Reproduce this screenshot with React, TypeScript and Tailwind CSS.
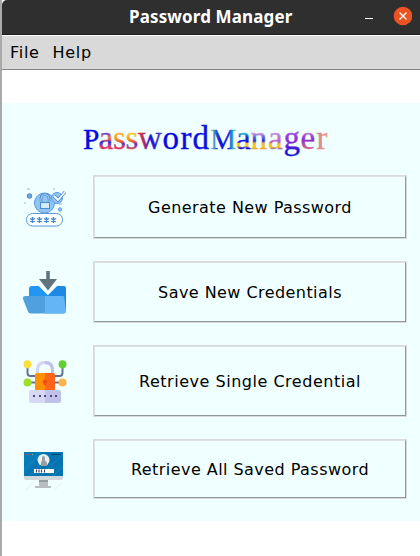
import React from "react";

function GenerateIcon() {
  return (
    <svg width="42" height="40" viewBox="0 0 42 40" fill="none">
      <path d="M7 38 38 7M20 39 41 17M0 25 16 8" stroke="#dce9ea" strokeWidth=".6" />
      <circle cx="5.500" cy="8" r="2.300" fill="#6dabe4" stroke="#4b83bd" />
      <path d="M3 1h3M10 13h3M29 1h2M35 16h3M36 19v2M0 15h2" stroke="#8bbbe9" />
      <circle cx="20.500" cy="15" r="10" fill="#8fc4f3" stroke="#5b9de0" />
      <path d="M17 14v-3.500q0-4 4-4t4 4V14" stroke="#4c8ed2" strokeWidth="2.600" />
      <path d="M17 14v-3.500q0-4 4-4t4 4V14" stroke="#c9e5fb" strokeWidth=".8" />
      <rect x="16.500" y="14.500" width="9" height="6" fill="#d3ebfd" stroke="#4c8ed2" />
      <circle cx="33" cy="10" r="5.500" fill="#8fc4f3" stroke="#5b9de0" />
      <path d="m30 8 4 4 7-8" stroke="#4787cb" strokeWidth="3.200" />
      <path d="m30 8 4 4 7-8" stroke="#fff" strokeWidth="1.800" />
      <circle cx="36" cy="21.500" r="1.600" fill="#8fc4f3" stroke="#5b9de0" />
      <rect x="2.500" y="25.500" width="36" height="12.500" rx="6" fill="#fcffff" stroke="#5a98d8" />
      <path d="M8.500 29v6M6 30.500l5 3M11 30.500l-5 3M15.500 29v6M13 30.500l5 3M18 30.500l-5 3M22.500 29v6M20 30.500l5 3M25 30.500l-5 3M29.500 29v6M27 30.500l5 3M32 30.500l-5 3" stroke="#4488cb" strokeWidth="1.400" />
    </svg>
  );
}

function SaveIcon() {
  return (
    <svg width="44" height="44" viewBox="0 0 44 44">
      <path d="M6 42V19q0-3 3-3h7l9 9 9-9h6q3 0 3 3v21q0 3-3 3z" fill="#2196f3" />
      <path d="M25 25l9-9h6q3 0 3 3v21q0 3-3 3H25z" fill="#1e88e5" />
      <path d="M2.500 26H41v17.500H8q-2.500 0-3-2L0 29q-.5-3 2.500-3z" fill="#519fdc" />
      <path d="M22 26h17q2 0 2.300 2L43 41q0 2.500-2 2.500H22z" fill="#64b5f6" />
      <path d="m14 14 11 11 11-11v-2H14z" fill="#f0ffff" />
      <path d="M23.200 1h3.600v8H34l-9 11.500L16 9h7.200z" fill="#60747e" />
    </svg>
  );
}

function RetrieveIcon() {
  return (
    <svg width="44" height="44" viewBox="0 0 44 44" fill="none">
      <path d="M4.500 6v8q0 3 3 3H15M39.500 6v8q0 3-3 3H30M7 23.500h7M30 23.500h7" stroke="#647295" strokeWidth="2" />
      <path d="M14.500 15v-4q0-7.500 7.500-7.500t7.500 7.500v4" stroke="#d4d5f3" strokeWidth="3" />
      <path d="M22 3.500q7.500 0 7.500 7.500v4" stroke="#bfc0e9" strokeWidth="3" />
      <path d="M12 16q0-2 2-2h8v19H12z" fill="#ff9100" />
      <path d="M22 14h8q2 0 2 2v17H22z" fill="#ff641a" />
      <path d="M22 20.500a2.200 2.200 0 0 0-1 4.200V26h2v-1.300a2.200 2.200 0 0 0-1-4.200z" fill="#ee4b19" />
      <circle cx="4.500" cy="5.300" r="4" fill="#ffdd40" />
      <circle cx="39.500" cy="5.300" r="4" fill="#66ce34" />
      <circle cx="4.500" cy="23.500" r="4" fill="#9edf28" />
      <circle cx="39.500" cy="23.500" r="4" fill="#ffb347" />
      <path d="M8 31h14v13H8q-2 0-2-2v-9q0-2 2-2z" fill="#d7d8f5" />
      <path d="M22 31h14q2 0 2 2v9q0 2-2 2H22z" fill="#c1c2ea" />
      <path d="M10 37h2M16 37h2M21 37h2M27 37h2M32 37h2" stroke="#484a78" strokeWidth="2" />
    </svg>
  );
}

function MonitorIcon() {
  return (
    <svg className="mt-[6px]" width="40" height="40" viewBox="0 0 40 40" fill="none">
      <path d="M0 0h39v24H0z" fill="#087bb9" />
      <path d="M20 0h19v24H0z" fill="#00659f" opacity=".3" />
      <path d="M0 18 18 0M5 24 29 0M17 24 39 2M29 24 39 14" stroke="#2189c0" strokeWidth=".6" />
      <path d="M0 24h39v2q0 2-2 2H2q-2 0-2-2z" fill="#d2d8d9" />
      <path d="M15 28h9v6h3v2H11v-2h4z" fill="#b7bdc0" />
      <path d="M15 28h9v2h-9z" fill="#929da2" />
      <circle cx="19.500" cy="8" r="6" fill="#e8f1f2" />
      <path d="M18 5.500q0-1.500 1.500-1.500t1.500 1.500v3l2 2V14h-6v-3.500l1-2z" fill="#9a9fa4" />
      <path d="M2 2.500h5" stroke="#d93b45" strokeDasharray="2 1" />
      <path d="M8 2.500h1" stroke="#81be8d" />
      <path d="M27 2.500h10" stroke="#07476c" />
      <path d="M10 17h20v4H10z" fill="#fff" />
      <path d="M12.500 17.500v3M15 17.500v3M17.500 17.500v3M20.500 17.500v3" stroke="#3d4751" strokeWidth="1.200" />
      <path d="m2 38 7-8M31 38l6-7" stroke="#d6e1e1" strokeWidth=".6" />
    </svg>
  );
}

type Stop = [number, string];
const vertical: Record<string, Stop[]> = {
  a1: [[9, "#7a48c8"], [12, "#e9784b"], [15, "#e24a4e"], [17, "#281ddd"], [19, "#6a2ecb"], [22, "#e83a5a"], [24, "#d83468"]],
  s1: [[8, "#fbb02a"], [14, "#f59a2c"], [17, "#e2533f"], [19, "#4d2dc8"], [22, "#e8425a"], [24, "#e22f55"]],
  s2: [[8, "#ffc62a"], [14, "#f5a02c"], [17, "#e8553f"], [19, "#5632c4"], [22, "#a04a86"], [24, "#e24a50"]],
  a2: [[8, "#35c9d0"], [12, "#1a32dc"], [17, "#1411d8"], [18.5, "#f3c21f"], [21, "#f9cd1b"], [23, "#1616d8"]],
  n: [[8, "#d9a2de"], [12, "#6b5fe0"], [16, "#2723d8"], [18, "#d9b24a"], [21, "#fbc816"], [24, "#e6a83a"]],
  a3: [[8, "#b99be0"], [13, "#c66fc8"], [17, "#b95fc4"], [19, "#f5b92a"], [22, "#f9c81b"], [24, "#9a58ba"]],
  g: [[8, "#9c4fd8"], [17, "#8a25d8"], [22, "#5d22da"], [25, "#1c14dc"], [30, "#1c14dc"]],
  e: [[8, "#b76ad8"], [14, "#8a2bd0"], [18, "#a640b8"], [24, "#cf6a90"]],
};
const horizontal: Record<string, { from: number; to: number; stops: Stop[] }> = {
  w: { from: 57, to: 82, stops: [[0, "#e8352f"], [0.3, "#a02a80"], [0.45, "#1f14dc"], [0.7, "#2c22cc"], [1, "#6a55b8"]] },
  m: { from: 130, to: 155, stops: [[0, "#8fdcae"], [0.2, "#2d62c8"], [0.35, "#0f10dc"], [0.7, "#1420dc"], [0.88, "#2cb6cc"], [1, "#8ccf8e"]] },
  r: { from: 235, to: 247, stops: [[0, "#cf7c9a"], [0.5, "#e28f84"], [1, "#f0a890"]] },
};
const letters = [
  { char: "P", x: 2, fill: "#0a0adf", cap: true },
  { char: "a", x: 17.5, fill: "url(#a1)" },
  { char: "s", x: 32, fill: "url(#s1)" },
  { char: "s", x: 44.5, fill: "url(#s2)" },
  { char: "w", x: 57, fill: "url(#w)" },
  { char: "o", x: 81.5, fill: "#0a0adf" },
  { char: "r", x: 99.5, fill: "#0a0adf" },
  { char: "d", x: 111.5, fill: "#0d12dc" },
  { char: "M", x: 129, fill: "url(#m)", cap: true },
  { char: "a", x: 155, fill: "url(#a2)" },
  { char: "n", x: 169.5, fill: "url(#n)" },
  { char: "a", x: 187, fill: "url(#a3)" },
  { char: "g", x: 202.5, fill: "url(#g)" },
  { char: "e", x: 219.5, fill: "url(#e)" },
  { char: "r", x: 235.5, fill: "url(#r)" },
];

function Wordmark() {
  return (
    <svg width="254" height="48" viewBox="0 -10 254 48" role="img">
      <defs>
        {Object.entries(vertical).map(([id, stops]) => (
          <linearGradient key={id} id={id} gradientUnits="userSpaceOnUse" x1="0" y1="0" x2="0" y2="30">
            {stops.map(([y, color]) => <stop key={y} offset={y / 30} stopColor={color} />)}
          </linearGradient>
        ))}
        {Object.entries(horizontal).map(([id, g]) => (
          <linearGradient key={id} id={id} gradientUnits="userSpaceOnUse" x1={g.from} y1="0" x2={g.to} y2="0">
            {g.stops.map(([at, color]) => <stop key={at} offset={at} stopColor={color} />)}
          </linearGradient>
        ))}
      </defs>
      <text y="24.300" fontFamily="'Liberation Serif', serif">
        {letters.map(({ char, x, fill, cap }) => (
          <tspan key={x} x={x} fill={fill} stroke={fill} strokeWidth={0.35} fontSize={cap ? 29.5 : 33}>{char}</tspan>
        ))}
      </text>
      <path d="M10 11q-4 0-4 3t4 2" stroke="#0a0adf" fill="none" />
    </svg>
  );
}

function Action({ icon, label, height, tracking }: { icon: React.ReactNode; label: string; height: string; tracking: string }) {
  return (
    <div className={`flex items-center ${height}`}>
      <div className="flex w-[91px] shrink-0 justify-start">{icon}</div>
      <button className="h-full w-[314px] border border-[#d9d9d9] bg-[#f0ffff] p-0">
        <span className={`flex h-full items-center justify-center border border-t-[#dce2e2] border-r-[#8f9999] border-b-[#8f9999] border-l-[#dce2e2] pt-[2px] text-[16px] whitespace-nowrap ${tracking}`}>
          {label}
        </span>
      </button>
    </div>
  );
}

export default function App() {
  return (
    <main className="flex h-[556px] w-[420px] flex-col overflow-hidden border-l-2 border-[#aaa] bg-white font-['DejaVu_Sans',sans-serif] text-black">
      <header className="flex h-[35px] shrink-0 items-center rounded-tl-[5px] border-b border-[#1f1d1d] bg-[#302f2f] pl-[127px] text-white">
        <h1 className="w-[170px] pb-px font-['Noto_Sans',sans-serif] text-[17px] font-bold tracking-[0.13px] whitespace-nowrap">Password Manager</h1>
        <svg className="mr-[8px] mb-[2px] ml-auto" width="50" height="22" viewBox="0 0 50 22" fill="none">
          <path d="M3 13.500h8" stroke="#fff" />
          <circle cx="41" cy="11" r="9.300" fill="#e95420" />
          <path d="m37.500 7.500 7 7m0-7-7 7" stroke="#fff" strokeWidth="1.300" />
        </svg>
      </header>
      <nav className="flex h-[35px] shrink-0 items-center gap-[13px] border-t border-b border-t-white border-b-[#858585] bg-[#d9d9d9] pl-[8px] text-[16px] tracking-[0.7px]">
        <span>File</span><span>Help</span>
      </nav>
      <section className="mt-[33px] h-[418px] shrink-0 bg-[#f0ffff]">
        <div className="flex h-[72px] pt-[12px] pl-[79px]"><Wordmark /></div>
        <div className="flex flex-col gap-[22px]">
          <Action icon={<div className="pt-px pl-[22px]"><GenerateIcon /></div>} label="Generate New Password" height="h-[64px]" tracking="tracking-[0.44px]" />
          <Action icon={<div className="pl-[21px]"><SaveIcon /></div>} label="Save New Credentials" height="h-[62px]" tracking="tracking-[0.44px]" />
          <Action icon={<div className="pb-px pl-[21px]"><RetrieveIcon /></div>} label="Retrieve Single Credential" height="h-[72px]" tracking="tracking-[0.52px]" />
          <Action icon={<div className="pl-[22px]"><MonitorIcon /></div>} label="Retrieve All Saved Password" height="h-[60px]" tracking="tracking-[0.45px]" />
        </div>
      </section>
    </main>
  );
}
